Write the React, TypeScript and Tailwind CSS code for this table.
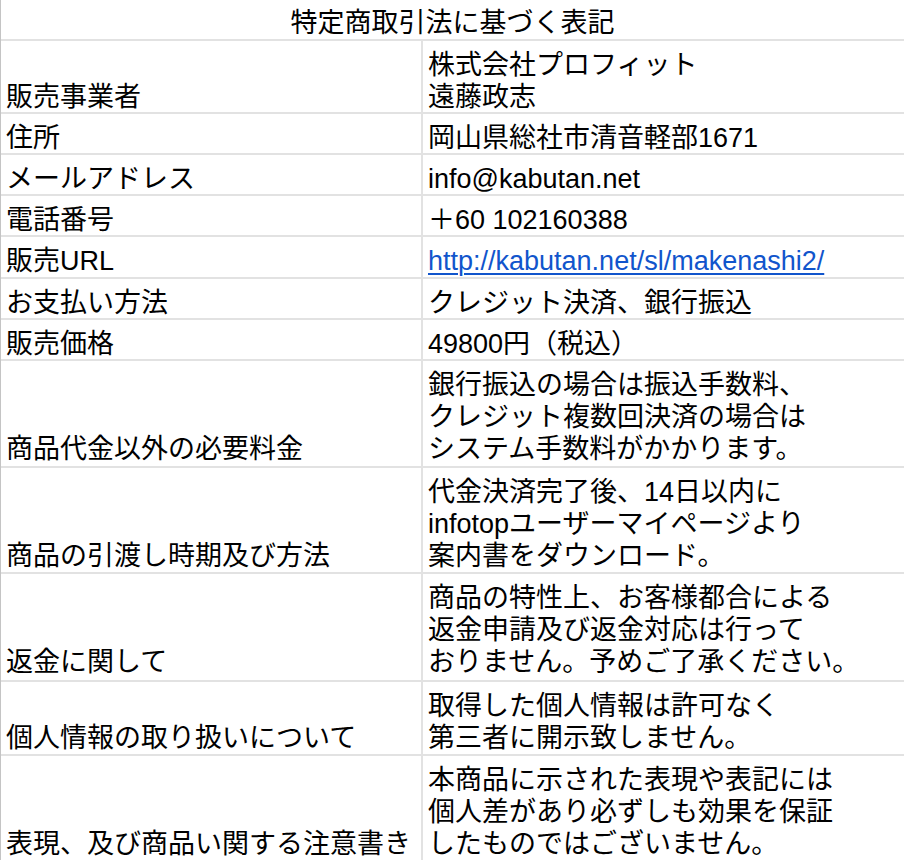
import React from "react";

type Row = {
  label: string;
  lines: React.ReactNode[];
  h: string;
  leftPt: string;
};

const rows: Row[] = [
  { label: "販売事業者", lines: ["株式会社プロフィット", "遠藤政志"], h: "h-[73px]", leftPt: "pt-[40px]" },
  { label: "住所", lines: ["岡山県総社市清音軽部1671"], h: "h-[41px]", leftPt: "pt-[8px]" },
  { label: "メールアドレス", lines: ["info@kabutan.net"], h: "h-[41px]", leftPt: "pt-[8px]" },
  { label: "電話番号", lines: ["＋60 102160388"], h: "h-[41px]", leftPt: "pt-[8px]" },
  {
    label: "販売URL",
    lines: [
      <a key="u" href="#" className="text-[#1155cc] underline underline-offset-[3px] decoration-[1.5px]">
        http://kabutan.net/sl/makenashi2/
      </a>,
    ],
    h: "h-[42px]",
    leftPt: "pt-[8px]",
  },
  { label: "お支払い方法", lines: ["クレジット決済、銀行振込"], h: "h-[41px]", leftPt: "pt-[8px]" },
  { label: "販売価格", lines: ["49800円（税込）"], h: "h-[41px]", leftPt: "pt-[8px]" },
  {
    label: "商品代金以外の必要料金",
    lines: ["銀行振込の場合は振込手数料、", "クレジット複数回決済の場合は", "システム手数料がかかります。"],
    h: "h-[107px]",
    leftPt: "pt-[72px]",
  },
  {
    label: "商品の引渡し時期及び方法",
    lines: ["代金決済完了後、14日以内に", "infotopユーザーマイページより", "案内書をダウンロード。"],
    h: "h-[106px]",
    leftPt: "pt-[72px]",
  },
  {
    label: "返金に関して",
    lines: ["商品の特性上、お客様都合による", "返金申請及び返金対応は行って", "おりません。予めご了承ください。"],
    h: "h-[108px]",
    leftPt: "pt-[72px]",
  },
  {
    label: "個人情報の取り扱いについて",
    lines: ["取得した個人情報は許可なく", "第三者に開示致しません。"],
    h: "h-[74px]",
    leftPt: "pt-[40px]",
  },
  {
    label: "表現、及び商品い関する注意書き",
    lines: ["本商品に示された表現や表記には", "個人差があり必ずしも効果を保証", "したものではございません。"],
    h: "h-[108px]",
    leftPt: "pt-[72px]",
  },
];

export default function App() {
  return (
    <div
      className="w-[904px] min-h-[860px] bg-white text-black text-[27px] leading-[32px] overflow-hidden"
      style={{ fontFamily: '"Liberation Sans", "Noto Sans CJK JP", sans-serif' }}
    >
      <div className="border-l border-[#c4c4c4]">
        <div className="h-[41px] border-b-2 border-[#e2e2e2] pt-[7px] text-center whitespace-nowrap">
          特定商取引法に基づく表記
        </div>
        {rows.map((r, i) => (
          <div key={i} className={`flex border-b-2 border-[#e2e2e2] ${r.h}`}>
            <div className={`w-[422px] shrink-0 border-r-2 border-[#e2e2e2] pl-[5px] whitespace-nowrap ${r.leftPt}`}>
              {r.label}
            </div>
            <div className="flex-1 pl-[5px] pt-[8px] whitespace-nowrap">
              {r.lines.map((l, j) => (
                <div key={j}>{l}</div>
              ))}
            </div>
          </div>
        ))}
      </div>
    </div>
  );
}
